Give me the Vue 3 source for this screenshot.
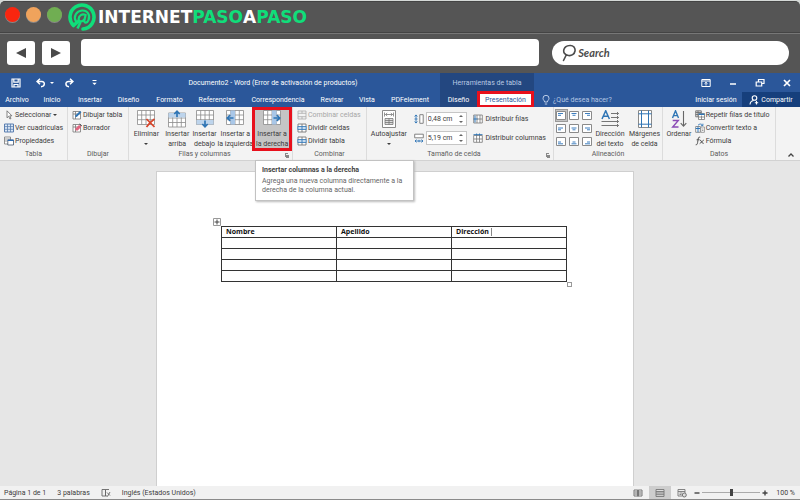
<script setup>
import { ref } from 'vue'

const address = ref('')
const query = ref('')
const rowHeight = ref('0,48 cm')
const columnWidth = ref('5,19 cm')
const zoom = ref(50)

const tabs = ['Archivo', 'Inicio', 'Insertar', 'Diseño', 'Formato', 'Referencias', 'Correspondencia', 'Revisar', 'Vista', 'PDFelement']
const headers = ['Nombre', 'Apellido', 'Dirección']
const tableTools = [
  { icon: 'cursor', label: 'Seleccionar', menu: true },
  { icon: 'gridlines', label: 'Ver cuadrículas' },
  { icon: 'props', label: 'Propiedades' },
]
const drawTools = [
  { icon: 'pencil', label: 'Dibujar tabla' },
  { icon: 'eraser', label: 'Borrador' },
]
const insertTools = [
  { icon: 'del', lines: ['Eliminar'], menu: true },
  { icon: 'above', lines: ['Insertar', 'arriba'] },
  { icon: 'below', lines: ['Insertar', 'debajo'] },
  { icon: 'left', lines: ['Insertar a', 'la izquierda'] },
  { icon: 'right', lines: ['Insertar a', 'la derecha'], active: true },
]
const mergeTools = [
  { icon: 'merge', label: 'Combinar celdas', disabled: true },
  { icon: 'split', label: 'Dividir celdas' },
  { icon: 'split', label: 'Dividir tabla' },
]
const dataTools = [
  { icon: 'repeat', label: 'Repetir filas de título' },
  { icon: 'convert', label: 'Convertir texto a' },
  { icon: 'fx', label: 'Fórmula' },
]
const alignments = [
  'Arriba izquierda', 'Arriba centro', 'Arriba derecha',
  'Centro izquierda', 'Centro', 'Centro derecha',
  'Abajo izquierda', 'Abajo centro', 'Abajo derecha',
]
</script>

<template>
  <svg class="sprite" aria-hidden="true">
    <symbol id="cursor" viewBox="0 0 10 10"><path d="M3 .8v7l1.7-1.6 1.2 2.8 1.1-.5-1.2-2.7h2.1z" fill="#fff" stroke="#666" stroke-width=".8" /></symbol>
    <symbol id="gridlines" viewBox="0 0 10 10"><path d="M.5 1h9v8h-9z" fill="#dce8f6" stroke="#5b7fb0" /><path d="M.5 3.6h9M.5 6.3h9M3.5 1v8M6.5 1v8" stroke="#5b7fb0" stroke-width=".8" /></symbol>
    <symbol id="props" viewBox="0 0 10 10"><path d="M.5 1h6v7h-6z" fill="#fff" stroke="#777" stroke-width=".8" /><path d="M.5 3h6M.5 5h3" stroke="#777" stroke-width=".7" /><path d="M3.8 4h5.7v5H3.8z" fill="#fff" stroke="#44546a" stroke-width=".8" /><path d="M3.8 4.3h5.7" stroke="#2f6eb5" stroke-width="1.4" /></symbol>
    <symbol id="pencil" viewBox="0 0 10 10"><path d="M1 1.5h7.5V9H1zM1 4h7.5M3.5 1.5V9" fill="#fff" stroke="#777" stroke-width=".8" /><path d="M3.2 7.2l.4-1.9L8 .9l1.4 1.4L5 6.7z" fill="#2f75b5" /></symbol>
    <symbol id="eraser" viewBox="0 0 10 10"><path d="M1 1.5h7.5V9H1zM1 4h7.5M3.5 1.5V9" fill="#fff" stroke="#777" stroke-width=".8" /><path d="M3 6l4-4 2.5 1.5L5.8 7.6H4z" fill="#e16580" /><path d="M7.5 1L9.8 2.8" stroke="#444" /></symbol>
    <symbol id="merge" viewBox="0 0 10 10"><path d="M1 1h8v8H1zM1 3.3h8M1 6.7h8M5 1v2.3M5 6.7V9" fill="none" stroke="#aaa" stroke-width=".8" /></symbol>
    <symbol id="split" viewBox="0 0 10 10"><path d="M1 4V1h8v3M1 6v3h8V6M5 1v2.5M5 6.5V9" fill="#fff" stroke="#777" stroke-width=".9" /><path d="M.8 3.6h8.4v2.8H.8zM5 3.6v2.8" fill="#d6e6f6" stroke="#2f75b5" stroke-width=".9" /></symbol>
    <symbol id="repeat" viewBox="0 0 10 10"><path d="M.7.8h5.6v6H.7zM.7 2.5h5.6M.7 4.5h5.6M3 .8v6" fill="#ddd" stroke="#666" stroke-width=".8" /><path d="M3.5 3.5h6v6h-6zM3.5 7h6M6.5 5.5v4" fill="#fff" stroke="#777" stroke-width=".8" /><path d="M3.5 4.3h6" stroke="#2f75b5" stroke-width="1.4" /></symbol>
    <symbol id="convert" viewBox="0 0 10 10"><path d="M.7 3.5h4.6v5.8H.7z" fill="#fff" stroke="#777" stroke-width=".8" /><path d="M.7 5.5h4.6M3 3.5v5.8" stroke="#2f75b5" /><path d="M5.8 4h3.6v5.3H5.8zM7 6h1.4M7 7.5h1.4" fill="#fff" stroke="#777" stroke-width=".7" /><path d="M3 2.3c1.4-1.7 3.5-1.6 4.6 0M7.9.7v2H6" fill="none" stroke="#2f75b5" stroke-width=".9" /></symbol>
    <symbol id="fx" viewBox="0 0 10 10"><path d="M5.2 1.2C3.4.4 3.2 2.5 2.9 4.6 2.6 7 2.3 9.3.7 8.8M1.6 3.8h3M5 4.2c1.5-.6 1.5 3.8 3.7 3.2M8.8 4L4.7 7.6" fill="none" stroke="#444" stroke-width=".9" /></symbol>
    <symbol id="rows" viewBox="0 0 10 10"><path d="M.7 1h8.6v8H.7zM4 1v8M7 1v8M4 5h5.3" fill="#fff" stroke="#777" stroke-width=".8" /><path d="M2 1.5v7M.5 5h4" stroke="#2f75b5" /></symbol>
    <symbol id="cols" viewBox="0 0 10 10"><path d="M.7 2.5h8.6V9.3H.7zM.7 6h8.6M3.6 2.5v6.8M6.5 2.5v6.8" fill="#fff" stroke="#777" stroke-width=".8" /><path d="M.5 1.6h9M3.6.5v2M6.5.5v2" stroke="#2f75b5" stroke-width=".9" /></symbol>
    <symbol id="height" viewBox="0 0 10 10"><path d="M2 1v8M.6 2.5L2 .9l1.4 1.6M.6 7.5L2 9.1l1.4-1.6M.5 5h3" fill="none" stroke="#2f75b5" stroke-width=".9" /><path d="M5.8.7h3.4v8.6H5.8z" fill="#fff" stroke="#777" stroke-width=".9" /></symbol>
    <symbol id="width" viewBox="0 0 10 10"><path d="M.7 1.2h8.6v3.6H.7z" fill="#fff" stroke="#777" stroke-width=".9" /><path d="M1 8h8M2.5 6.6L1 8l1.5 1.4M7.5 6.6L9 8 7.5 9.4M5 6.8v2.4" fill="none" stroke="#2f75b5" stroke-width=".9" /></symbol>

    <symbol id="tbl" viewBox="0 0 18 18"><path d="M.5.5h17v14H.5zM.5 5h17M.5 9.7h17M4.7.5v14M9 .5v14M13.3.5v14" fill="#fff" stroke="#8a8a8a" stroke-width=".8" /></symbol>
    <symbol id="del" viewBox="0 0 18 18"><use href="#tbl" width="18" height="18" /><path d="M9.5 9l8 8M17.5 9c-3 2-5.500 4.500-8 8" fill="none" stroke="#d8452b" stroke-width="1.700" /></symbol>
    <symbol id="above" viewBox="0 0 18 18"><path d="M.5 3h17v14H.5zM.5 8h17M.5 12.500h17M4.700 3v14M9 3v14M13.300 3v14" fill="#fff" stroke="#8a8a8a" stroke-width=".8" /><path d="M.5 3h17v4.500H.5z" fill="#bdd4ec" /><path d="M9 7V1.500M6.300 4L9 1.300 11.700 4" fill="none" stroke="#2f75b5" stroke-width="1.700" /></symbol>
    <symbol id="below" viewBox="0 0 18 18"><use href="#tbl" width="18" height="18" /><path d="M.5 10h17v4.500H.5z" fill="#bdd4ec" /><path d="M9 10.500v6M6.300 14L9 16.800l2.700-2.800" fill="none" stroke="#2f75b5" stroke-width="1.700" /></symbol>
    <symbol id="left" viewBox="0 0 18 18"><use href="#tbl" width="18" height="18" /><path d="M4.500.5H9v14H4.500z" fill="#a9c7e8" /><path d="M7.500 8H1.500M4.200 5.200L1.300 8l2.900 2.800" fill="none" stroke="#2f75b5" stroke-width="1.700" /></symbol>
    <symbol id="right" viewBox="0 0 18 18"><use href="#tbl" width="18" height="18" /><path d="M9 .5h4.500v14H9z" fill="#a9c7e8" /><path d="M10.500 8h6M13.800 5.200L16.700 8l-2.900 2.800" fill="none" stroke="#2f75b5" stroke-width="1.700" /></symbol>
    <symbol id="autofit" viewBox="0 0 18 18"><path d="M2.500.5h13v17h-13z" fill="#fff" stroke="#8a8a8a" /><path d="M5 8.500h8v6H5zM5 10.500h8M5 12.500h8M9 8.500v6" fill="#ddd" stroke="#777" stroke-width=".8" /><path d="M4.500 2.500v4M13.500 2.500v4M5.500 4.500h7M7.200 3L5.500 4.500 7.200 6M10.800 3l1.700 1.500L10.800 6" fill="none" stroke="#777" stroke-width=".8" /></symbol>
    <symbol id="textdir" viewBox="0 0 18 18"><path d="M1 9L4.700.8 8.400 9M2.300 6.300h4.900" fill="none" stroke="#2f75b5" stroke-width="1.500" /><path d="M10 3.500h7.500M10 7.500h7.500M.5 11.500h17M.5 15.500h17M16 2l1.500 1.500L16 5M16 6l1.500 1.500L16 9M16 10l1.500 1.500L16 13M16 14l1.500 1.500L16 17" fill="none" stroke="#666" stroke-width=".9" /></symbol>
    <symbol id="margins" viewBox="0 0 18 18"><path d="M2.500.5h13v17h-13z" fill="#fff" stroke="#8a8a8a" /><path d="M5.500.5v17M12.500.5v17M2.500 3.800h13M2.500 14.200h13" stroke="#2f75b5" /></symbol>
    <symbol id="sort" viewBox="0 0 18 18"><path d="M2.500 8L5.500.8 8.500 8M3.600 5.600h3.800" fill="none" stroke="#2f75b5" stroke-width="1.400" /><path d="M2.700 10.500h5.600l-5.600 6.500h5.800" fill="none" stroke="#8b4bb5" stroke-width="1.400" /><path d="M13.500 1v15M10.700 13.200l2.800 3 2.800-3" fill="none" stroke="#666" stroke-width="1.100" /></symbol>
  </svg>

  <div class="app">
    <header class="chrome">
      <div class="chrome-top">
        <span class="dot red"></span><span class="dot orange"></span><span class="dot green"></span>
        <svg class="brand-mark" viewBox="0 0 28 28" aria-hidden="true">
          <path d="M5.500 22.500A12 12 0 1 1 15 26M5.500 22.500l4-3.500" fill="none" stroke="#10de7a" stroke-width="3.600" stroke-linecap="round" />
          <path d="M8 18.500C5 13.500 8.500 8 14 7.500c5.500-.3 8.500 4.500 6.500 9.500-1.300 3.300-4.300 3.500-4.200.8l1.300-5.800c-3.600-1.700-6.800.6-7 4 0 3.200 3.900 3.200 5.500.5" fill="none" stroke="#10de7a" stroke-width="2.200" stroke-linecap="round" />
          <path d="M12.500 19L9.500 25.500" stroke="#10de7a" stroke-width="2.600" />
        </svg>
        <span class="brand">INTERNET<b>PASO</b>A<b>PASO</b></span>
      </div>
      <div class="chrome-nav">
        <button class="nav" aria-label="Atrás"><svg viewBox="0 0 10 10"><path d="M0 5l10-5v10z" fill="#4a4a4a" /></svg></button>
        <button class="nav" aria-label="Adelante"><svg viewBox="0 0 10 10"><path d="M10 5L0 0v10z" fill="#4a4a4a" /></svg></button>
        <input v-model="address" class="address" type="text" aria-label="Dirección web">
        <label class="search">
          <svg viewBox="0 0 16 18" aria-hidden="true"><path d="M8.500 1.500c4-.5 6 2.500 5.500 5.500-.5 3.300-3.500 5-6.500 4.500C3.500 11 2 8 3 5.200 3.800 3 6 1.700 8.500 1.500zM5 11.500L2.500 16.500" fill="none" stroke="#4c4c4c" stroke-width="1.600" stroke-linecap="round" /></svg>
          <input v-model="query" type="text" placeholder="Search" aria-label="Search">
        </label>
      </div>
    </header>

    <div class="titlebar">
      <div class="quick">
        <button aria-label="Guardar"><svg viewBox="0 0 10 10"><path d="M1 1h8v8H1zM2.800 1v3.200h4.400V1M3 9V6.500h4V9" fill="none" stroke="#fff" stroke-width="1.200" /></svg></button>
        <button aria-label="Deshacer"><svg viewBox="0 0 10 10"><path d="M4 .8L1 3.500l3 2.700M1.300 3.500h4.500c3.500 0 3.500 5-.8 5.200" fill="none" stroke="#fff" stroke-width="1.500" /></svg><i class="caret"></i></button>
        <button aria-label="Rehacer"><svg viewBox="0 0 10 10"><path d="M6 .8l3 2.700-3 2.700M8.700 3.500H4.500C1 3.500 1 8.500 5 8.700" fill="none" stroke="#fff" stroke-width="1.500" /></svg></button>
        <button aria-label="Personalizar barra"><svg viewBox="0 0 10 10"><path d="M.5 2.500h4" stroke="#fff" /><path d="M.3 4.700h4.400L2.500 7z" fill="#fff" /></svg></button>
      </div>
      <h1>Documento2 - Word (Error de activación de productos)</h1>
      <span class="context">Herramientas de tabla</span>
      <div class="window-buttons">
        <button aria-label="Opciones de cinta"><svg viewBox="0 0 10 10"><path d="M.8 1.500h8.400v7H.8zM.8 3h8.400M5 7.500v-3M3.500 5.700L5 4.300l1.500 1.400" fill="none" stroke="#fff" /></svg></button>
        <button aria-label="Minimizar"><svg viewBox="0 0 10 10"><path d="M2 6h6" stroke="#fff" stroke-width="1.500" /></svg></button>
        <button aria-label="Restaurar"><svg viewBox="0 0 10 10"><path d="M3.500 3.500v-2H9v4H7M1.200 4h5.500v4H1.200z" fill="none" stroke="#fff" stroke-width="1.200" /></svg></button>
        <button aria-label="Cerrar"><svg viewBox="0 0 10 10"><path d="M2 2l6 6M8 2L2 8" stroke="#fff" stroke-width="1.700" /></svg></button>
      </div>
    </div>

    <nav class="tabs">
      <button v-for="tab in tabs" :key="tab">{{ tab }}</button>
      <button class="ctx">Diseño</button>
      <button class="current">Presentación</button>
      <button class="tell">
        <svg viewBox="0 0 10 10"><path d="M3.600 7C3.600 5.500 2 5 2 3.300a3 3 0 0 1 6 0C8 5 6.400 5.500 6.400 7zM3.800 9h2.400" fill="none" stroke="#c9d8ef" stroke-width=".9" /></svg>¿Qué desea hacer?
      </button>
      <button class="login">Iniciar sesión</button>
      <button class="share">
        <svg viewBox="0 0 10 10"><circle cx="5.500" cy="3" r="2.300" fill="none" stroke="#fff" stroke-width="1.100" /><path d="M1 9.500c.2-2.500 1.500-3.700 3.500-4M7.500 6v3.500M5.800 7.700h3.400" fill="none" stroke="#fff" stroke-width="1.100" /></svg>Compartir
      </button>
    </nav>

    <section class="ribbon">
      <div class="group">
        <div class="tools stack">
          <button v-for="t in tableTools" :key="t.label" class="row"><svg><use :href="'#' + t.icon" /></svg>{{ t.label }}<i v-if="t.menu" class="caret"></i></button>
        </div>
        <h2>Tabla</h2>
      </div>
      <div class="group">
        <div class="tools stack">
          <button v-for="t in drawTools" :key="t.label" class="row"><svg><use :href="'#' + t.icon" /></svg>{{ t.label }}</button>
        </div>
        <h2>Dibujar</h2>
      </div>
      <div class="group launch">
        <div class="tools inserts">
          <button v-for="t in insertTools" :key="t.icon" class="big" :class="{ active: t.active }">
            <svg><use :href="'#' + t.icon" /></svg>
            <span v-for="line in t.lines" :key="line">{{ line }}</span>
            <i v-if="t.menu" class="caret"></i>
          </button>
          <div class="tooltip" role="tooltip">
            <strong>Insertar columnas a la derecha</strong>
            <p>Agrega una nueva columna directamente a la derecha de la columna actual.</p>
          </div>
        </div>
        <h2>Filas y columnas</h2>
      </div>
      <div class="group">
        <div class="tools stack">
          <button v-for="t in mergeTools" :key="t.label" class="row" :disabled="t.disabled"><svg><use :href="'#' + t.icon" /></svg>{{ t.label }}</button>
        </div>
        <h2>Combinar</h2>
      </div>
      <div class="group launch">
        <div class="tools size">
          <button class="big"><svg><use href="#autofit" /></svg><span>Autoajustar</span><i class="caret"></i></button>
          <div class="pair">
            <label class="field"><svg><use href="#height" /></svg><span class="spin"><input v-model="rowHeight" type="text" aria-label="Alto de fila"><span class="arrows"><i></i><i></i></span></span></label>
            <label class="field"><svg><use href="#width" /></svg><span class="spin"><input v-model="columnWidth" type="text" aria-label="Ancho de columna"><span class="arrows"><i></i><i></i></span></span></label>
          </div>
          <div class="pair">
            <button class="row"><svg><use href="#rows" /></svg>Distribuir filas</button>
            <button class="row"><svg><use href="#cols" /></svg>Distribuir columnas</button>
          </div>
        </div>
        <h2>Tamaño de celda</h2>
      </div>
      <div class="group">
        <div class="tools align">
          <div class="nine">
            <button v-for="(a, i) in alignments" :key="a" :aria-label="a" :class="{ on: i === 0 }">
              <svg viewBox="0 0 10 9"><path d="M.5.5h9v8h-9z" fill="#fff" stroke="#8a8a8a" /><path :d="['M2 2.500h5M2 4.300h3', 'M2.500 2.500h5M3.500 4.300h3', 'M3 2.500h5M5 4.300h3', 'M2 4h5M2 5.800h3', 'M2.500 4h5M3.500 5.800h3', 'M3 4h5M5 5.800h3', 'M2 5h3M2 6.800h5', 'M3.500 5h3M2.500 6.800h5', 'M5 5h3M3 6.800h5'][i]" stroke="#3f7fbf" /></svg>
            </button>
          </div>
          <button class="big"><svg><use href="#textdir" /></svg><span>Dirección</span><span>del texto</span></button>
          <button class="big"><svg><use href="#margins" /></svg><span>Márgenes</span><span>de celda</span></button>
        </div>
        <h2>Alineación</h2>
      </div>
      <div class="group">
        <div class="tools data">
          <button class="big"><svg><use href="#sort" /></svg><span>Ordenar</span></button>
          <div class="stack">
            <button v-for="t in dataTools" :key="t.label" class="row"><svg><use :href="'#' + t.icon" /></svg>{{ t.label }}</button>
          </div>
        </div>
        <h2>Datos</h2>
      </div>
      <button class="collapse" aria-label="Contraer la cinta"><svg viewBox="0 0 8 8"><path d="M1.500 5.500L4 3l2.500 2.500" fill="none" stroke="#444" stroke-width="1.300" /></svg></button>
    </section>

    <main class="canvas">
      <article class="page">
        <div class="table-wrap">
          <svg class="move" viewBox="0 0 8 8" aria-hidden="true"><path d="M.5.5h7v7h-7z" fill="#fff" stroke="#999" /><path d="M4 1.500v5M1.500 4h5" stroke="#444" /></svg>
          <table>
            <thead><tr><th v-for="(h, i) in headers" :key="h">{{ h }}<i v-if="i === 2" class="ibeam"></i></th></tr></thead>
            <tbody><tr v-for="r in 4" :key="r"><td v-for="c in 3" :key="c"></td></tr></tbody>
          </table>
          <span class="resize"></span>
        </div>
      </article>
    </main>

    <footer class="status">
      <span>Página 1 de 1</span>
      <span>3 palabras</span>
      <svg class="proof" viewBox="0 0 10 10" aria-hidden="true"><path d="M1 1.500h3.500V8H1zM4.500 8V1.500H8M4.500 8h2M6 4.500L9 7.500M9 4L6.500 8.500" fill="none" stroke="#666" stroke-width=".9" /></svg>
      <span>Inglés (Estados Unidos)</span>
      <div class="views">
        <button aria-label="Modo lectura"><svg viewBox="0 0 10 10"><path d="M1 2h3.500v6H1zM5.500 2H9v6H5.500zM1.500 4h2.500M1.500 6h2.500M6 4h2.500M6 6h2.500M5 1.500V9" fill="none" stroke="#777" /></svg></button>
        <button class="on" aria-label="Diseño de impresión"><svg viewBox="0 0 10 10"><path d="M1 1.500h8v7H1zM1 3.500h8M1 5h8M1 6.700h8" fill="#ddd" stroke="#777" stroke-width=".9" /></svg></button>
        <button aria-label="Diseño web"><svg viewBox="0 0 10 10"><path d="M1 1.500h7V5M1 1.500V8h4M1 3.500h7M2.500 5h3M2.500 6.500h2" fill="none" stroke="#777" stroke-width=".9" /><circle cx="7.300" cy="7" r="2" fill="#ddd" stroke="#666" stroke-width=".9" /></svg></button>
      </div>
      <div class="zoom">
        <button aria-label="Alejar"><svg viewBox="0 0 8 8"><path d="M1.500 4h5" stroke="#444" stroke-width="1.400" /></svg></button>
        <input v-model="zoom" type="range" min="0" max="100" aria-label="Zoom">
        <button aria-label="Acercar"><svg viewBox="0 0 8 8"><path d="M1.500 4h5M4 1.500v5" stroke="#444" stroke-width="1.400" /></svg></button>
      </div>
      <span>100 %</span>
    </footer>
  </div>
</template>

<style>
body { background: #d5d9d7; }
</style>

<style scoped>
* { box-sizing: border-box; }
.sprite { position: absolute; width: 0; height: 0; }
.app {
  display: flex; flex-direction: column; min-height: 100vh; overflow: hidden;
  padding-top: 1px; font: 7px/10px Roboto, "Open Sans", sans-serif; color: #3c3c3c;
}
button { margin: 0; padding: 0; border: 0; background: none; font: inherit; color: inherit; display: flex; align-items: center; justify-content: center; white-space: nowrap; min-width: 0; }
input { font: inherit; color: inherit; border: 0; padding: 0; min-width: 0; outline: 0; }
svg { flex: none; display: block; }
h1, h2, p { margin: 0; font: inherit; }
.caret { flex: none; border: 2px solid transparent; border-top-color: currentColor; border-bottom: 0; }

.chrome { background: #555; border-radius: 5px 5px 0 0; color: #fff; border-top: 1px solid #444; }
.chrome-top { display: flex; align-items: center; height: 31px; padding-left: 5px; gap: 6px; border-bottom: 1px solid #444; }
.dot { width: 15px; height: 15px; margin-top: -6px; border-radius: 50%; box-shadow: 0 1px 0 #888; }
.red { background: #f9260f; }
.orange { background: #f0a35c; }
.green { background: #70ae52; }
.brand-mark { width: 28px; height: 28px; }
.brand { font: bold 17px/20px "DejaVu Sans", sans-serif; margin-left: -4px; }
.brand b { color: #10de7a; }
.chrome-nav { display: flex; align-items: center; gap: 7px; height: 40px; padding: 0 11px 2px 7px; border-top: 1px solid #777; }
.nav { width: 28px; height: 24px; border-radius: 3px; background: #fff; }
.nav svg { width: 10px; height: 10px; }
.address { flex: 460; height: 27px; margin: 0 6px 0 4px; border-radius: 4px; background: #fff; color: #444; font-size: 12px; padding: 0 8px; }
.search { flex: 237; display: flex; align-items: center; height: 24px; padding-left: 9px; border-radius: 12px; background: #fff; color: #4c4c4c; }
.search svg { width: 16px; height: 18px; }
.search input { flex: 1; background: none; padding-left: 1px; font: italic bold 11px/14px Lato, sans-serif; }
.search input::placeholder { color: #4c4c4c; opacity: 1; }

.titlebar { display: grid; grid-template-columns: 106fr 334fr 94fr 266fr; align-items: center; height: 19px; background: #2b579a; color: #fff; }
.titlebar > * { min-width: 0; }
.quick { display: grid; grid-template-columns: 25px 28px 28px 10px; padding-left: 11px; }
.quick button { gap: 4px; justify-content: flex-start; }
.quick svg, .window-buttons svg { width: 10px; height: 10px; }
.titlebar h1 { text-align: center; white-space: nowrap; }
.context { align-self: stretch; display: flex; align-items: center; justify-content: center; background: #234780; color: #b9c9e3; white-space: nowrap; }
.window-buttons { display: flex; justify-content: flex-end; gap: 17px; padding-right: 8px; }

.tabs {
  display: grid; height: 15px; background: #2b579a; color: #fff;
  grid-template-columns: 34fr 36fr 40fr 37fr 45fr 50fr 72fr 36fr 34fr 56fr 37fr 57fr 83fr 73fr 52fr 58fr;
}
.tabs button:nth-child(10) { padding-right: 4px; }
.tabs .ctx { background: #234780; }
.tabs .current { background: #fff; color: #2b579a; border: 3px solid #e8101c; margin: -1px 0; height: 17px; }
.tabs .tell { justify-content: flex-start; gap: 2px; padding-left: 7px; color: #b3c5e2; }
.tabs .login { grid-column: 15; }
.tabs .share { gap: 2px; background: #163f7c; }
.tabs svg { width: 10px; height: 10px; }

.ribbon { display: grid; grid-template-columns: 68fr 61fr 164fr 74fr 187fr 109fr 113fr 24fr; grid-template-rows: 100%; height: 54px; background: #f3f3f3; border-bottom: 1px solid #d2d2d2; }
.group { display: flex; flex-direction: column; min-width: 0; padding-bottom: 1px; border-right: 1px solid #dcdcdc; }
.group h2 { text-align: center; line-height: 9px; color: #5c5c5c; white-space: nowrap; }
.launch h2 { padding-right: 12px; background: linear-gradient(#888, #888) right 4px top 3px / 3px 1px no-repeat, linear-gradient(#888, #888) right 6px top 3px / 1px 4px no-repeat, linear-gradient(#888, #888) right 3px bottom 1px / 3px 3px no-repeat; }
.tools { flex: 1; min-height: 0; }
.stack { display: flex; flex-direction: column; align-items: flex-start; gap: 3px; padding: 3px 0 0 4px; }
.row { gap: 1px; line-height: 10px; }
.row svg { width: 10px; height: 10px; }
.row .caret { margin-left: 1px; }
.row:disabled { color: #a6a6a6; }
.big { flex-direction: column; justify-content: flex-start; padding-top: 3px; line-height: 10px; }
.big svg { width: 18px; height: 18px; margin-bottom: 1px; }
.big .caret { margin-top: 4px; }
.inserts { position: relative; display: grid; grid-template-columns: 35fr 27fr 28fr 34fr 40fr; grid-template-rows: 44px; }
.big.active { background: #c5c5c5; border: 3px solid #e8101c; padding-top: 0; }
.tooltip {
  position: absolute; z-index: 2; top: 53px; left: 126px; width: 159px; height: 41px; padding: 5px 6px;
  background: #fff; border: 1px solid #c2c2c2; box-shadow: 1px 1px 2px #bbb; line-height: 9px; color: #666; white-space: nowrap;
}
.tooltip strong { display: block; color: #444; margin-bottom: 2px; line-height: 9px; }
.tooltip p { white-space: normal; }
.size { display: grid; grid-template-columns: 44fr 63fr 80fr; }
.pair { display: flex; flex-direction: column; gap: 5px; padding-top: 5px; align-items: flex-start; }
.pair .row { height: 14px; gap: 2px; }
.field { display: flex; align-items: center; gap: 2px; width: 100%; padding: 0 6px 0 3px; }
.field svg { width: 10px; height: 10px; }
.spin { flex: 1; display: flex; align-items: center; min-width: 0; height: 14px; border: 1px solid #c6c6c6; background: #fff; }
.spin input { width: 0; flex: 1; background: none; padding-left: 1px; }
.arrows { display: flex; flex-direction: column; gap: 4px; padding-right: 3px; }
.arrows i { border: 2px solid transparent; border-top: 0; border-bottom: 2px solid #666; }
.arrows i + i { border-top: 2px solid #666; border-bottom: 0; }
.align { display: grid; grid-template-columns: 39fr 34fr 35fr; }
.nine { display: grid; grid-template-columns: repeat(3, 1fr); grid-auto-rows: 13px; padding: 2px 0 0 1px; }
.nine svg { width: 10px; height: 9px; }
.nine .on { background: #c5c5c5; outline: 1px solid #999; outline-offset: -1px; }
.data { display: grid; grid-template-columns: 32fr 81fr; }
.data .stack { padding-left: 0; }
.collapse { align-self: end; justify-self: end; width: 18px; height: 10px; }
.collapse svg { width: 8px; height: 8px; }

.canvas { flex: 1; display: flex; justify-content: center; padding: 10px 10px 0 0; background: #e6e6e6; }
.page { width: 60.5%; background: #fff; border: 1px solid #cfcfcf; border-bottom: 0; padding: 54px 66px 0 64px; }
.table-wrap { position: relative; }
table { width: 100%; table-layout: fixed; border-collapse: collapse; color: #111; }
th, td { height: 11px; padding: 0 4px; border: 1px solid #333; text-align: left; font: bold 7px/10px "Open Sans", sans-serif; }
.ibeam { display: inline-block; height: 8px; border-left: 1px solid #888; margin-left: 2px; vertical-align: middle; }
.move { position: absolute; left: -8px; top: -8px; width: 8px; height: 8px; }
.resize { position: absolute; right: -5px; bottom: -5px; width: 5px; height: 5px; border: 1px solid #999; background: #fff; }

.status { display: flex; align-items: center; height: 14px; padding: 0 5px 0 4px; background: #f1f1f1; border-bottom: 1px solid #8a8a8a; white-space: nowrap; gap: 11px; }
.proof { width: 10px; height: 10px; }
.views { display: flex; align-self: stretch; margin-left: auto; }
.views button { width: 22px; }
.views svg { width: 10px; height: 10px; }
.views .on { background: #cdcdcd; }
.zoom { display: flex; align-items: center; gap: 1px; margin: 0 -4px 0 -11px; }
.zoom svg { width: 8px; height: 8px; }
.zoom input { appearance: none; width: 58px; height: 10px; margin: 0; background: linear-gradient(#aaa, #aaa) center / 100% 1px no-repeat; }
.zoom input::-webkit-slider-thumb { appearance: none; width: 3px; height: 7px; background: #444; }
</style>
